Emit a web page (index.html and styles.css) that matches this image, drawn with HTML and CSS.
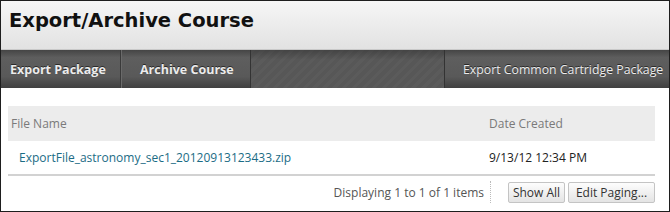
FILE: index.html
```html
<!DOCTYPE html>
<html>
<head>
<meta charset="utf-8">
<link rel="stylesheet" href="styles.css">
</head>
<body>
<div class="frame">
  <div class="header"><h1 class="title">Export/Archive Course</h1></div>
  <div class="tabs">
    <div class="tab tab-export">Export Package</div>
    <div class="tab tab-archive">Archive Course</div>
    <div class="tab-fill"></div>
    <div class="tab tab-cc">Export Common Cartridge Package</div>
  </div>
  <div class="content">
    <div class="grid">
      <div class="thead">
        <div class="col-name">File Name</div>
        <div class="col-date">Date Created</div>
      </div>
      <div class="trow">
        <div class="col-name"><a class="file-link" href="#">ExportFile_astronomy_sec1_20120913123433.zip</a></div>
        <div class="col-date">9/13/12 12:34 PM</div>
      </div>
      <div class="tfoot">
        <span class="count">Displaying <b>1</b> to <b>1</b> of <b>1</b> items</span>
        <span class="sep"></span>
        <button class="btn btn-all">Show All</button>
        <button class="btn btn-paging">Edit Paging...</button>
      </div>
    </div>
  </div>
</div>
</body>
</html>
```
FILE: styles.css
```css
* { box-sizing: border-box; }
html, body { margin: 0; padding: 0; background: #fff; }
body { font-family: "Open Sans", "DejaVu Sans", sans-serif; }
.frame {
  width: 670px; height: 212px;
  border: 1px solid #1e1e1e;
  overflow: hidden;
  background: #fff;
}
.header {
  height: 49px;
  background: linear-gradient(#f6f6f6, #e2e2e2);
  border-bottom: 1px solid #c9c9c9;
  padding: 8px 0 0 8px;
}
.title {
  margin: 0;
  font-family: "DejaVu Sans", sans-serif;
  font-size: 19.5px;
  font-weight: bold;
  color: #111;
}
.tabs {
  display: flex;
  height: 38px;
  background: #4e4e4e;
}
.tab {
  display: flex;
  align-items: center;
  height: 38px;
  font-size: 12.5px;
  color: #ececec;
  background: linear-gradient(#454545 0%, #5e5e5e 20%, #595959 70%, #404040 100%);
  text-shadow: 0 -1px 0 #2a2a2a;
}
.tab-export {
  width: 120px;
  padding-left: 9px;
  font-weight: bold;
  border-right: 1px solid #3a3a3a;
}
.tab-archive {
  width: 130px;
  padding-left: 18px;
  font-weight: bold;
  border-left: 1px solid #6a6a6a;
  border-right: 1px solid #333;
}
.tab-fill {
  width: 193px;
  height: 38px;
  background:
    linear-gradient(rgba(0,0,0,0.22), rgba(0,0,0,0) 25%),
    repeating-linear-gradient(135deg, #5b5b5b 0 3px, #575757 3px 7px);
}
.tab-cc {
  flex: 1;
  padding-left: 18px;
  font-size: 12.3px;
  border-left: 1px solid #333;
  white-space: nowrap;
}
.content { padding: 18px 13px 0 7px; }
.grid { width: 647px; font-size: 12px; }
.thead, .trow {
  display: flex;
  align-items: center;
}
.thead {
  height: 35px;
  background: #ececec;
  color: #7a7a7a;
}
.trow {
  height: 35px;
  border-bottom: 2px solid #d2d2d2;
  color: #222;
}
.col-name { width: 481px; padding-left: 3px; }
.trow .col-name { padding-left: 11px; }
.col-date { flex: 1; }
.file-link { color: #1b6c85; text-decoration: none; }
.tfoot {
  display: flex;
  align-items: center;
  justify-content: flex-end;
  height: 32px;
  color: #555;
}
.count b { font-weight: normal; }
.sep {
  width: 1px; height: 22px;
  border-left: 1px dotted #bbb;
  margin: 0 17px 0 6px;
}
.btn {
  font-family: inherit;
  font-size: 12px;
  color: #333;
  height: 21px;
  margin-left: 3px;
  border: 1px solid #c4c4c4;
  border-radius: 2px;
  background: linear-gradient(#fdfdfd, #e4e4e4);
}
.btn-all { width: 57px; padding: 0; margin-left: 0; }
.btn-paging { width: 87px; padding: 0; }
```
